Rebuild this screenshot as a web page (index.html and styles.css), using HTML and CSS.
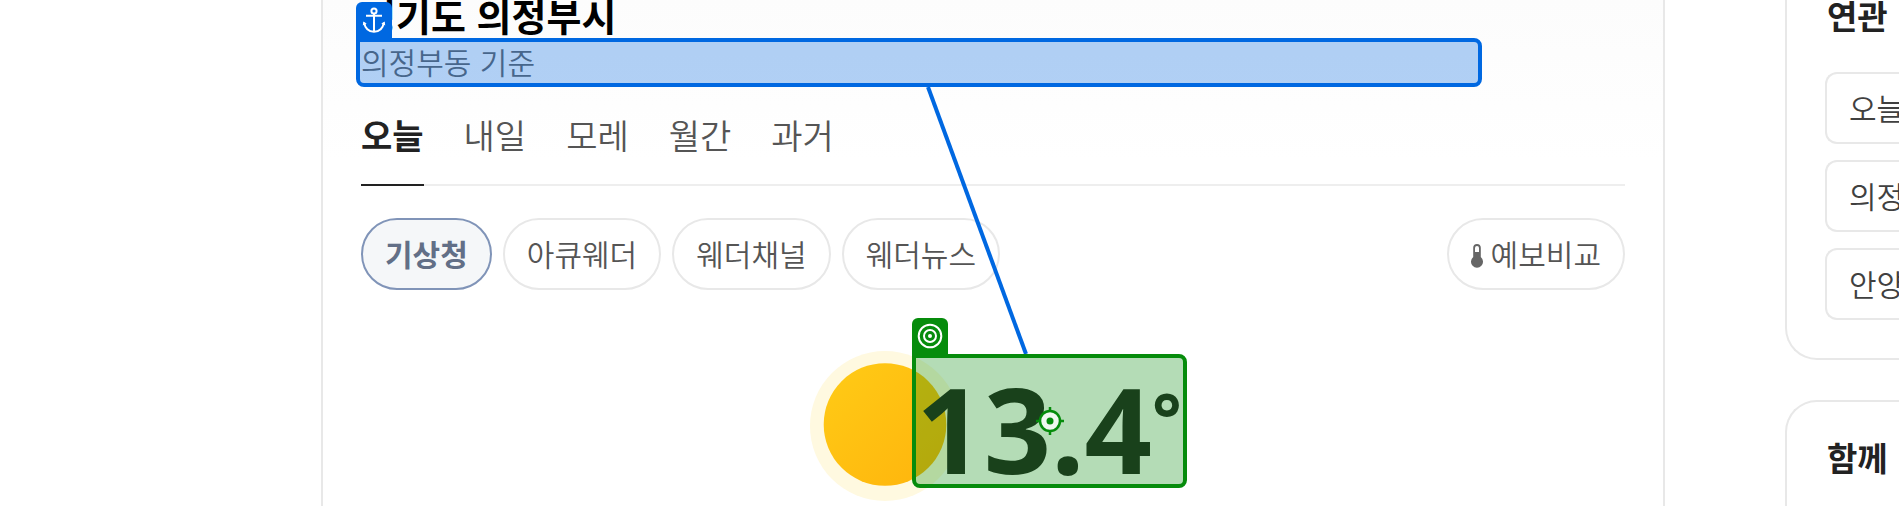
FILE: index.html
```html
<!DOCTYPE html>
<html lang="ko">
<head>
<meta charset="utf-8">
<title>경기도 의정부시 날씨</title>
<link rel="stylesheet" href="styles.css">
</head>
<body>
<div class="page">
  <main class="weather">
    <h1 class="title">경기도 의정부시</h1>
    <div class="basis">
      의정부동 기준
      <div class="mark mark-anchor">
        <svg class="badge" viewBox="0 0 36 36" aria-hidden="true">
          <g fill="none" stroke="#fff" stroke-width="2">
            <circle cx="18" cy="9" r="2.6"/>
            <path d="M10 13.800h16M18 11.6v17.6"/>
            <path d="M8.2 20.5c.6 5.500 4.500 9.200 9.800 9.200s9.200-3.700 9.800-9.200"/>
          </g>
          <path d="M6.800 23.400l.5-3.900 3.400 2.200zM29.200 23.400l-.5-3.900-3.400 2.200z" fill="#fff"/>
        </svg>
      </div>
    </div>

    <nav class="tabs">
      <a class="tab tab-active" href="#today">오늘</a>
      <a class="tab" href="#tomorrow">내일</a>
      <a class="tab" href="#dayafter">모레</a>
      <a class="tab" href="#month">월간</a>
      <a class="tab" href="#past">과거</a>
    </nav>

    <div class="sources">
      <button class="chip chip-active" type="button">기상청</button>
      <button class="chip" type="button">아큐웨더</button>
      <button class="chip" type="button">웨더채널</button>
      <button class="chip" type="button">웨더뉴스</button>
      <button class="chip chip-compare" type="button">
        <svg class="thermo" viewBox="0 0 12 24" aria-hidden="true">
          <path d="M6 0a3.800 3.800 0 0 0-3.800 3.800v9.300a6 6 0 1 0 7.600 0V3.800A3.800 3.800 0 0 0 6 0z" fill="#666"/>
          <path d="M6 2a2 2 0 0 0-2 2v4h4V4a2 2 0 0 0-2-2z" fill="#fff"/>
        </svg>예보비교
      </button>
    </div>

    <div class="now">
      <svg class="sun" viewBox="0 0 150 150" role="img" aria-label="맑음">
        <defs>
          <linearGradient id="sun-fill" x1="0.1" y1="0.1" x2="0.9" y2="0.9">
            <stop offset="0" stop-color="#ffc915"/>
            <stop offset="1" stop-color="#ffb60d"/>
          </linearGradient>
        </defs>
        <circle cx="75" cy="75" r="75" fill="#fff9e0"/>
        <circle cx="75" cy="73.500" r="61.300" fill="url(#sun-fill)"/>
      </svg>
      <div class="temp">
        13.4<span class="degree">°</span>
        <div class="mark mark-target">
          <svg class="badge" viewBox="0 0 36 36" aria-hidden="true">
            <g fill="none" stroke="#fff" stroke-width="2">
              <circle cx="18" cy="18" r="11.300"/>
              <circle cx="18" cy="18" r="6"/>
            </g>
            <circle cx="18" cy="18" r="2" fill="#fff"/>
          </svg>
          <svg class="cross" viewBox="0 0 28 28" aria-hidden="true">
            <circle cx="14" cy="14" r="10" fill="#fff" fill-opacity=".8"/>
            <g fill="none" stroke="#068c0c" stroke-width="2.500">
              <circle cx="14" cy="14" r="10"/>
              <path d="M14 0v5M14 23v5M0 14h5M23 14h5"/>
            </g>
            <circle cx="14" cy="14" r="3.500" fill="#068c0c"/>
          </svg>
        </div>
      </div>
    </div>
    <svg class="link-line" viewBox="0 0 104 267" aria-hidden="true">
      <path d="M2 0L100 267" stroke="#0068e1" stroke-width="4"/>
    </svg>
  </main>

  <aside class="side">
    <section class="panel panel-related">
      <h2 class="panel-title">연관</h2>
      <a class="related" href="#r1">오늘</a>
      <a class="related" href="#r2">의정</a>
      <a class="related" href="#r3">안양</a>
    </section>
    <section class="panel panel-together">
      <h2 class="panel-title">함께</h2>
    </section>
  </aside>
</div>
</body>
</html>
```
FILE: styles.css
```css
* {
  box-sizing: border-box;
}

body {
  margin: 0;
  overflow: hidden;
  background: #fff;
  color: #222;
  font-family: "Noto Sans CJK KR", sans-serif;
  font-size: 30px;
}

h1,
h2 {
  margin: 0;
}

a {
  color: inherit;
  text-decoration: none;
}

.page {
  display: flex;
  gap: 120px;
  min-height: 100vh;
  padding-left: 321px;
}

.weather {
  position: relative;
  flex: 1;
  padding: 0 38px;
  border: solid #e8e8e8;
  border-width: 0 2px;
  background: linear-gradient(#fcfcfc, #fff 160px);
}

.title {
  height: 38px;
  color: #000;
  font-size: 38px;
  font-weight: 700;
  line-height: 30px;
}

.basis {
  position: relative;
  height: 49px;
  margin-right: 143px;
  color: #666;
  font-weight: 350;
  line-height: 47px;
}

.mark {
  position: absolute;
  border: 4px solid;
  border-radius: 0 8px 8px 8px;
}

.mark-anchor {
  inset: 0 0 0 -5px;
  border-color: #0068e1;
  background: rgba(0, 104, 225, 0.3);
}

.mark-target {
  inset: 0;
  border-color: #068c0c;
  background: rgba(6, 140, 12, 0.3);
}

.badge {
  position: absolute;
  bottom: 100%;
  left: -4px;
  width: 36px;
  height: 40px;
  padding-bottom: 4px;
  border-radius: 6px 6px 0 0;
}

.mark-anchor .badge {
  background: #0068e1;
}

.mark-target .badge {
  background: #068c0c;
}

.tabs {
  display: flex;
  gap: 40px;
  margin-top: 24px;
  box-shadow: inset 0 -2px #eee;
  color: #555;
  font-size: 34px;
  font-weight: 350;
  line-height: 48px;
}

.tab {
  padding-bottom: 25px;
  border-bottom: 2px solid transparent;
}

.tab-active {
  border-color: #222;
  color: #222;
  font-weight: 700;
}

.sources {
  display: flex;
  gap: 11px;
  margin-top: 32px;
}

.chip {
  display: flex;
  align-items: center;
  height: 72px;
  padding: 0 22px 2px;
  border: 2px solid #e8e8e8;
  border-radius: 36px;
  background: #fff;
  color: #555;
  font: inherit;
  font-weight: 350;
}

.chip-active {
  border-color: #8094b8;
  background: #f5f7f9;
  color: #626f87;
  font-weight: 700;
}

.chip-compare {
  gap: 8px;
  margin-left: auto;
}

.thermo {
  width: 12px;
  height: 24px;
  margin-top: 6px;
}

.now {
  display: flex;
  align-items: flex-start;
  justify-content: center;
  margin-top: 61px;
  padding-left: 11px;
}

.sun {
  width: 150px;
  height: 150px;
}

.temp {
  position: relative;
  height: 134px;
  margin: 3px 0 0 -48px;
  padding: 0 5px 0 4px;
  font-family: "Noto Sans", sans-serif;
  font-size: 118px;
  font-weight: 700;
  line-height: 150px;
}

.degree {
  font-size: 70px;
  line-height: 1;
  vertical-align: 30px;
}

.cross {
  position: absolute;
  top: 50%;
  left: 50%;
  width: 28px;
  height: 28px;
  margin: -14px;
}

.link-line {
  position: absolute;
  top: 87px;
  left: 45%;
  width: 104px;
  height: 267px;
}

.side {
  display: flex;
  flex: 0 0 114px;
  flex-direction: column;
  gap: 40px;
  min-width: 0;
}

.panel {
  padding-left: 38px;
  border: 2px solid #e8e8e8;
  border-right: 0;
  overflow: hidden;
  white-space: nowrap;
}

.panel-related {
  display: grid;
  gap: 16px;
  padding-bottom: 38px;
  border-top: 0;
  border-bottom-left-radius: 32px;
}

.panel-together {
  flex: 1;
  padding-top: 40px;
  border-bottom: 0;
  border-top-left-radius: 32px;
}

.panel-title {
  height: 56px;
  padding-left: 2px;
  font-size: 33px;
  font-weight: 700;
  line-height: 30px;
}

.related {
  height: 72px;
  padding-left: 22px;
  border: 2px solid #e8e8e8;
  border-right: 0;
  border-radius: 12px 0 0 12px;
  color: #404040;
  font-weight: 350;
  line-height: 66px;
}
```
